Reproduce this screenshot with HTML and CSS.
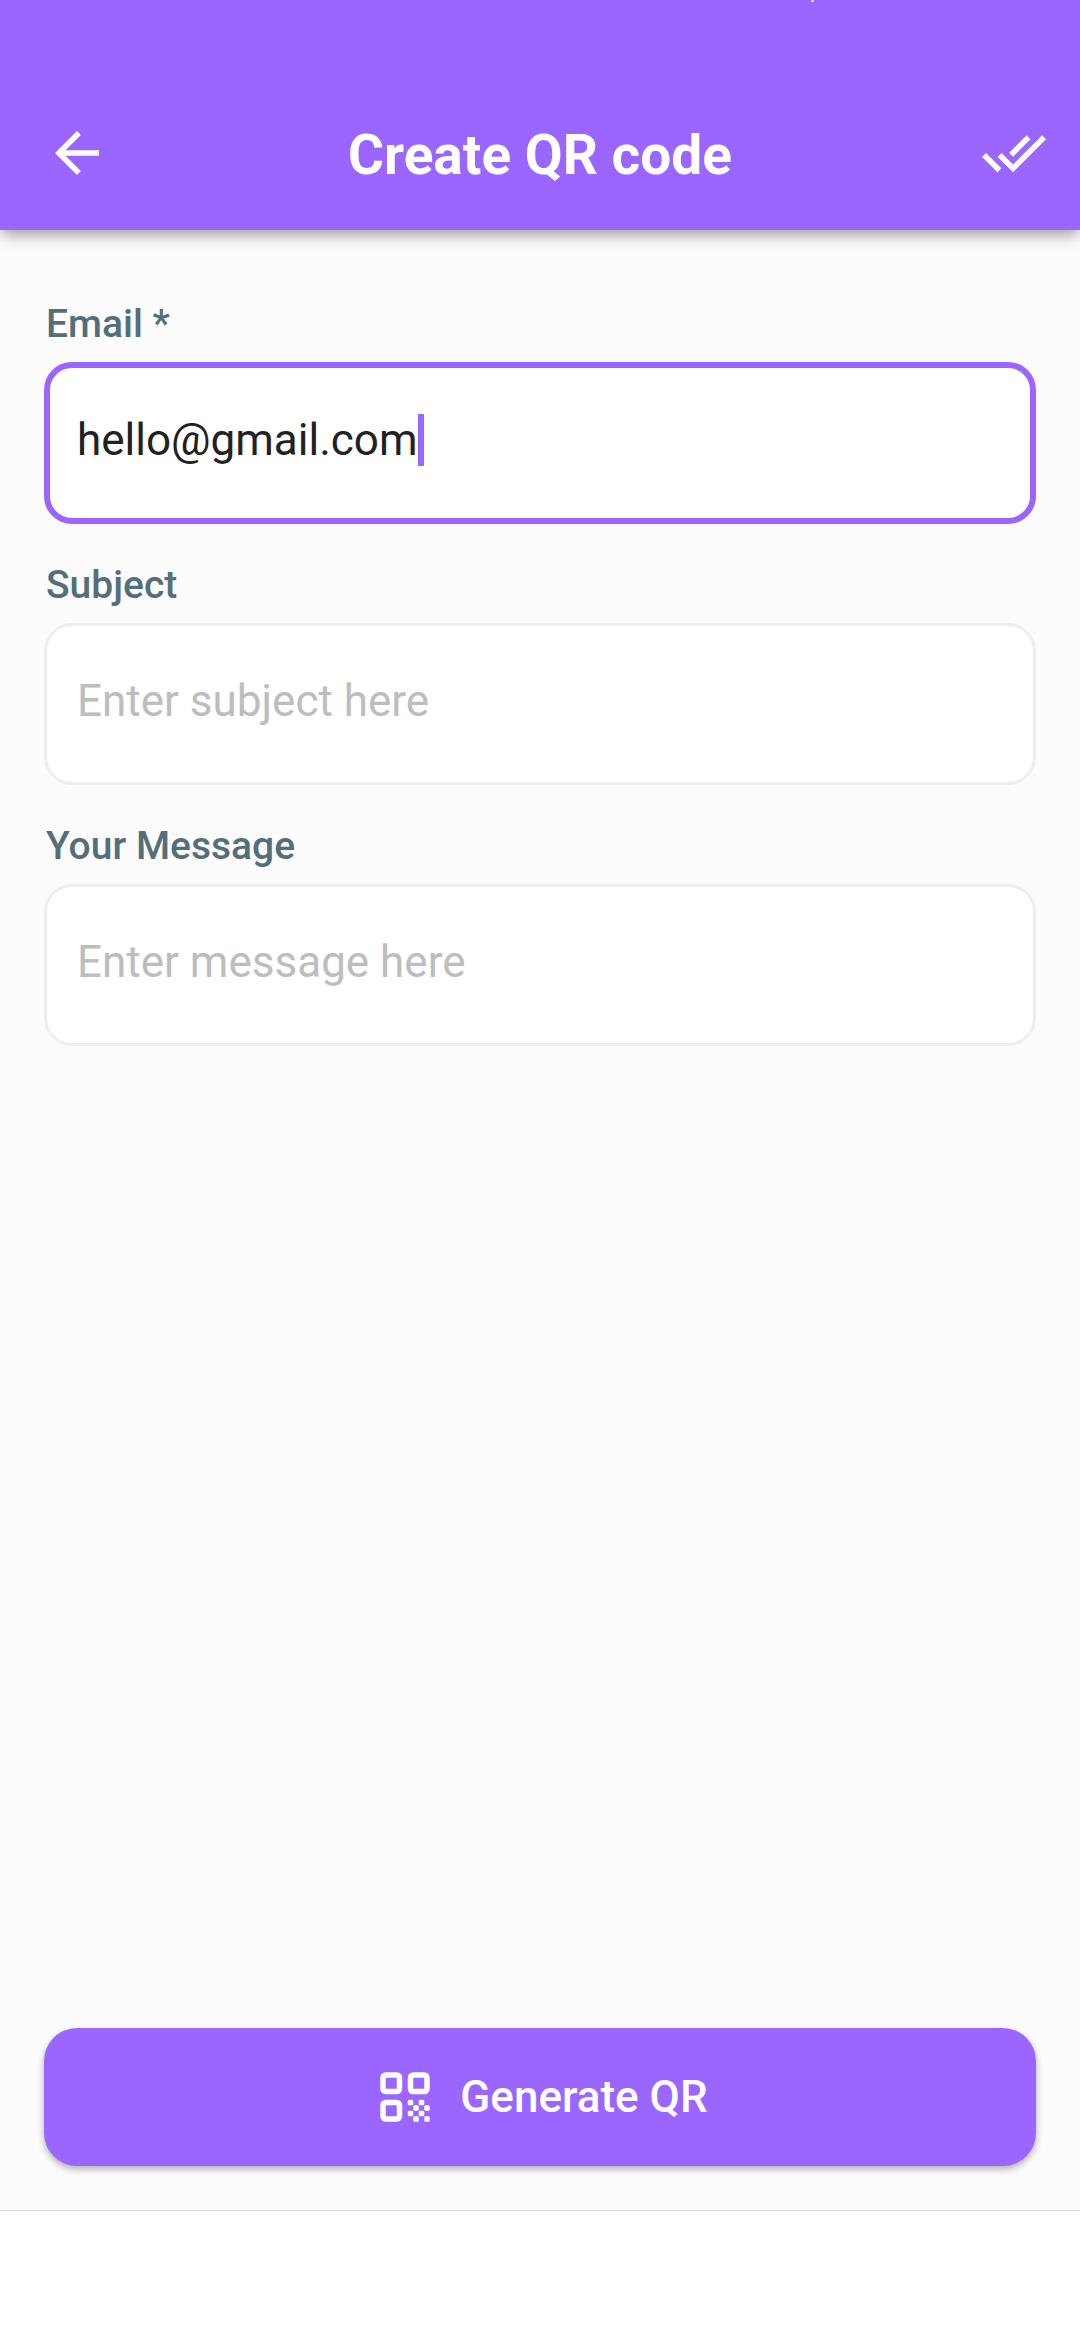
FILE: index.html
```html
<!DOCTYPE html>
<html lang="en">
<head>
  <meta charset="utf-8">
  <meta name="viewport" content="width=device-width, initial-scale=1">
  <title>Create QR code</title>
  <link rel="stylesheet" href="styles.css">
</head>
<body>
  <div class="screen">
    <header class="app-bar">
      <div class="status-bar"><span class="status-dot"></span></div>
      <div class="toolbar">
        <button class="icon-button" type="button" aria-label="Back">
          <svg class="icon" viewBox="0 0 24 24" aria-hidden="true"><path d="M20 11H7.83l5.59-5.59L12 4l-8 8 8 8 1.41-1.41L7.83 13H20v-2z"/></svg>
        </button>
        <h1 class="title">Create QR code</h1>
        <button class="icon-button" type="submit" form="qr-form" aria-label="Done">
          <svg class="icon" viewBox="0 0 24 24" aria-hidden="true"><path d="M18 7l-1.41-1.41-6.34 6.34 1.41 1.41L18 7zm4.24-1.41L11.66 16.17 7.48 12l-1.41 1.41L11.66 19l12-12-1.42-1.41zM.41 13.41L6 19l1.41-1.41L1.83 12 .41 13.41z"/></svg>
        </button>
      </div>
    </header>

    <form class="form" id="qr-form">
      <div class="fields">
        <div class="field">
          <label class="label" for="email">Email *</label>
          <div class="box box-active">
            <input class="input input-fit" id="email" type="text" inputmode="email" value="hello@gmail.com">
            <span class="caret"></span>
          </div>
        </div>
        <div class="field">
          <label class="label" for="subject">Subject</label>
          <div class="box">
            <input class="input" id="subject" type="text" placeholder="Enter subject here">
          </div>
        </div>
        <div class="field">
          <label class="label" for="message">Your Message</label>
          <div class="box">
            <input class="input" id="message" type="text" placeholder="Enter message here">
          </div>
        </div>
      </div>
      <button class="generate" type="submit">
        <svg class="icon" viewBox="0 0 24 24" aria-hidden="true">
          <g fill="none" stroke="currentColor" stroke-width="2">
            <rect x="4" y="4" width="6" height="6" rx="1"/>
            <rect x="14" y="4" width="6" height="6" rx="1"/>
            <rect x="4" y="14" width="6" height="6" rx="1"/>
          </g>
          <rect x="13" y="13" width="2" height="2" rx=".5"/>
          <rect x="17" y="13" width="2" height="2" rx=".5"/>
          <rect x="15" y="15" width="2" height="2" rx=".5"/>
          <rect x="19" y="15" width="2" height="2" rx=".5"/>
          <rect x="13" y="17" width="2" height="2" rx=".5"/>
          <rect x="17" y="17" width="2" height="2" rx=".5"/>
          <rect x="15" y="19" width="2" height="2" rx=".5"/>
          <rect x="19" y="19" width="2" height="2" rx=".5"/>
        </svg>
        Generate QR
      </button>
    </form>

    <footer class="bottom-bar"></footer>
  </div>
</body>
</html>
```

FILE: styles.css
```css
:root {
  --primary: #9a66ff;
  --surface: #fcfcfc;
}

* {
  box-sizing: border-box;
}

body {
  margin: 0;
  background: var(--surface);
  color: #212121;
  font-family: Roboto, "Noto Sans", sans-serif;
}

button,
input {
  margin: 0;
  padding: 0;
  border: 0;
  outline: 0;
  background: none;
  color: inherit;
  font: inherit;
}

.screen {
  display: flex;
  flex-direction: column;
  min-height: 100vh;
}

/* App bar */
.app-bar {
  background: var(--primary);
  color: #fff;
  box-shadow: 0 6px 12px -2px rgba(0, 0, 0, 0.26), 0 10px 16px -2px rgba(0, 0, 0, 0.14);
}

.status-bar {
  display: flex;
  justify-content: flex-end;
  height: 76px;
  padding-right: 266px;
}

.status-dot {
  width: 3px;
  height: 2px;
  background: #e0d0ff;
}

.toolbar {
  display: flex;
  align-items: center;
  justify-content: space-between;
  height: 154px;
  padding: 0 33px 0 44px;
}

.icon-button {
  display: flex;
}

.icon {
  width: 66px;
  height: 66px;
  fill: currentColor;
}

.title {
  flex: 1;
  margin: 0;
  padding: 3px 11px 0 0;
  font-size: 55px;
  line-height: 64px;
  font-weight: 700;
  text-align: center;
}

/* Form */
.form {
  display: flex;
  flex: 1;
  flex-direction: column;
  justify-content: space-between;
  padding: 71px 44px 44px;
}

.fields {
  display: flex;
  flex-direction: column;
  gap: 38px;
}

.field {
  display: flex;
  flex-direction: column;
  gap: 15px;
}

.label {
  padding-left: 2px;
  color: #546e7a;
  font-size: 39px;
  line-height: 46px;
  font-weight: 500;
}

.box {
  display: flex;
  height: 162px;
  padding: 49px 30px;
  border: 3px solid #eee;
  border-radius: 28px;
  background: #fff;
}

.box-active {
  padding: 46px 27px;
  border: 6px solid var(--primary);
}

.input {
  flex: 1;
  min-width: 0;
  height: 52px;
  font-size: 44px;
  line-height: 52px;
}

.input::placeholder {
  color: #bdbdbd;
  opacity: 1;
}

.input-fit {
  flex: none;
  field-sizing: content;
}

.caret {
  width: 6px;
  height: 52px;
  background: var(--primary);
}

.generate {
  display: flex;
  align-items: center;
  justify-content: center;
  gap: 22px;
  height: 138px;
  border-radius: 33px;
  background: var(--primary);
  color: #fff;
  font-size: 44px;
  line-height: 52px;
  font-weight: 500;
  box-shadow: 0 3px 6px rgba(0, 0, 0, 0.22), 0 4px 8px rgba(0, 0, 0, 0.1);
}

.bottom-bar {
  height: 130px;
  border-top: 1px solid #e0e0e0;
  background: #fff;
}
```
